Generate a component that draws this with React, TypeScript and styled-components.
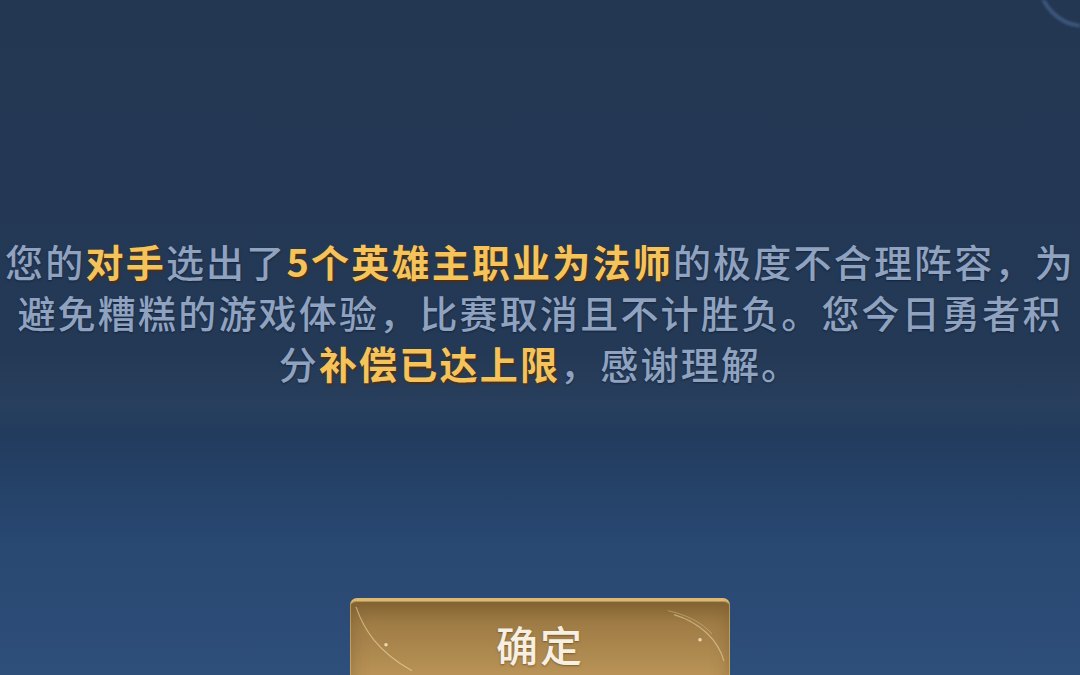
import React from 'react'
import styled, { createGlobalStyle } from 'styled-components'

const GlobalStyle = createGlobalStyle`
  html, body {
    margin: 0;
    padding: 0;
    background: #233753;
  }
  body {
    font-family: 'Noto Sans CJK SC', 'Noto Sans', sans-serif;
  }
`

const Screen = styled.div`
  position: relative;
  width: 1080px;
  height: 675px;
  overflow: hidden;
  display: flex;
  flex-direction: column;
  align-items: center;
  background: linear-gradient(
    180deg,
    #233753 0%,
    #243955 52%,
    #283f5d 60%,
    #223c5e 64.5%,
    #284771 80%,
    #2e4f7a 100%
  );
`

// faint ring peeking in at the top right corner
const Ring = styled.svg`
  position: absolute;
  top: 0;
  right: 0;
  width: 60px;
  height: 40px;
  filter: blur(1px);
`

const Notice = styled.div`
  margin-top: 235px;
  display: flex;
  flex-direction: column;
  align-items: center;
`

const Line = styled.div`
  font-size: 38px;
  line-height: 51px;
  letter-spacing: 2.2px;
  font-weight: 500;
  color: #8fa2c0;
  white-space: nowrap;
  text-shadow: 0 1px 2px rgba(10, 20, 40, 0.6);
`

const Mark = styled.span`
  color: #f4c35c;
  font-weight: 700;
  text-shadow: 1px 2px 2px rgba(90, 45, 0, 0.85);
`

const ConfirmButton = styled.button`
  position: relative;
  margin-top: 210px;
  width: 380px;
  height: 100px;
  flex-shrink: 0;
  border: none;
  border-top: 3px solid #dcb970;
  border-radius: 7px;
  padding: 0 0 12px;
  background: linear-gradient(180deg, #987640 0%, #a7834b 40%, #c49d5e 100%);
  box-shadow: inset 0 0 0 1px rgba(230, 200, 130, 0.5), inset 0 10px 18px rgba(80, 55, 20, 0.35);
  font-family: 'Noto Sans CJK SC', sans-serif;
  font-size: 42px;
  font-weight: 500;
  letter-spacing: 2px;
  color: #f6efe2;
  text-shadow: 0 1px 2px rgba(70, 45, 10, 0.5);
  overflow: hidden;
`

const Swirl = styled.svg`
  position: absolute;
  inset: 0;
  width: 100%;
  height: 100%;
  pointer-events: none;
`

const App: React.FC = () => {
  return (
    <>
      <GlobalStyle />
      <Screen>
        <Ring viewBox="0 0 60 40">
          <circle cx="65" cy="-20" r="46" fill="none" stroke="rgba(105,145,195,0.35)" strokeWidth="4" />
        </Ring>
        <Notice>
          <Line>
            您的<Mark>对手</Mark>选出了<Mark>5个英雄主职业为法师</Mark>的极度不合理阵容，为
          </Line>
          <Line>避免糟糕的游戏体验，比赛取消且不计胜负。您今日勇者积</Line>
          <Line>
            分<Mark>补偿已达上限</Mark>，感谢理解。
          </Line>
        </Notice>
        <ConfirmButton>
          <Swirl viewBox="0 0 380 100" preserveAspectRatio="none">
            <path d="M6 6 C 14 30, 28 52, 62 72" fill="none" stroke="rgba(245,225,180,0.55)" strokeWidth="1.2" />
            <circle cx="36" cy="45" r="1.8" fill="rgba(250,235,200,0.8)" />
            <path d="M324 14 C 350 22, 368 40, 374 62" fill="none" stroke="rgba(245,225,180,0.5)" strokeWidth="1.2" />
            <path d="M318 10 C 336 14, 352 22, 362 34" fill="none" stroke="rgba(245,225,180,0.35)" strokeWidth="1" />
            <circle cx="350" cy="40" r="1.8" fill="rgba(250,235,200,0.8)" />
          </Swirl>
          确定
        </ConfirmButton>
      </Screen>
    </>
  )
}

export default App
